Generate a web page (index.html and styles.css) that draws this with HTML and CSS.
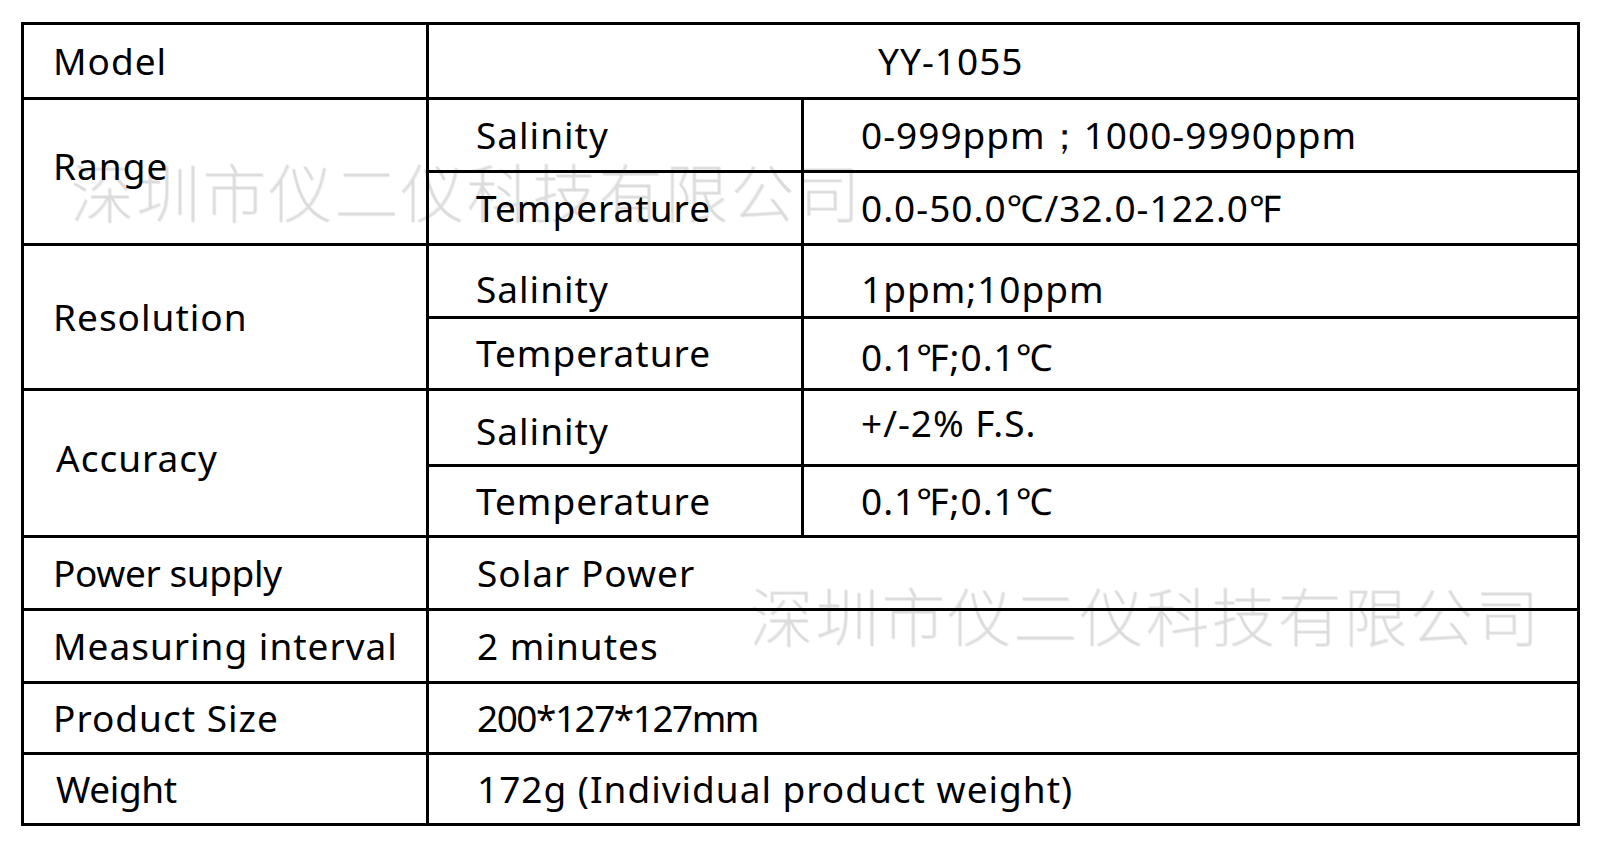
FILE: index.html
```html
<!DOCTYPE html>
<html lang="en">
<head>
    <meta charset="UTF-8">
    <meta name="viewport" content="width=device-width, initial-scale=1.0">
    <title>YY-1055 Specifications</title>
    <link rel="stylesheet" href="styles.css">
</head>
<body>
    <div class="sheet">
        <table class="spec-table">
            <colgroup>
                <col class="col-label">
                <col class="col-sub">
                <col class="col-value">
            </colgroup>
            <tr class="row-model">
                <td class="label">Model</td>
                <td class="model-value" colspan="2">YY-1055</td>
            </tr>

            <!-- Range -->
            <tr class="row-a">
                <td class="label up" rowspan="2">Range</td>
                <td class="sub">Salinity</td>
                <td class="value">0-999ppm；1000-9990ppm</td>
            </tr>
            <tr class="row-a">
                <td class="sub">Temperature</td>
                <td class="value">0.0-50.0℃/32.0-122.0℉</td>
            </tr>

            <!-- Resolution -->
            <tr class="row-a">
                <td class="label" rowspan="2">Resolution</td>
                <td class="sub down">Salinity</td>
                <td class="value down">1ppm;10ppm</td>
            </tr>
            <tr class="row-b">
                <td class="sub">Temperature</td>
                <td class="value down-s">0.1℉;0.1℃</td>
            </tr>

            <!-- Accuracy -->
            <tr class="row-c">
                <td class="label shift up" rowspan="2">Accuracy</td>
                <td class="sub down-s">Salinity</td>
                <td class="value up-s">+/-2% F.S.</td>
            </tr>
            <tr class="row-d">
                <td class="sub">Temperature</td>
                <td class="value">0.1℉;0.1℃</td>
            </tr>

            <tr class="row-a">
                <td class="label tight">Power supply</td>
                <td class="wide" colspan="2">Solar Power</td>
            </tr>
            <tr class="row-a">
                <td class="label">Measuring interval</td>
                <td class="wide" colspan="2">2 minutes</td>
            </tr>
            <tr class="row-d">
                <td class="label">Product Size</td>
                <td class="wide tighter" colspan="2">200*127*127mm</td>
            </tr>
            <tr class="row-d">
                <td class="label shift tight">Weight</td>
                <td class="wide" colspan="2">172g (Individual product weight)</td>
            </tr>
        </table>

        <!-- watermarks -->
        <div class="watermark mark-one">深圳市仪二仪科技有限公司</div>
        <div class="watermark mark-two">深圳市仪二仪科技有限公司</div>
    </div>
</body>
</html>
```

FILE: styles.css
```css
* {
    margin: 0;
    padding: 0;
    box-sizing: border-box;
}

body {
    background: #fff;
    font-family: "Noto Sans", "Open Sans", sans-serif;
    color: #000;
}

.sheet {
    position: relative;
    width: 1600px;
    height: 848px;
    padding: 22px 0 0 21px;
}

.spec-table {
    border-collapse: collapse;
    table-layout: fixed;
    width: 1556px;
    font-size: 37px;
    letter-spacing: 1px;
    line-height: 1;
}

.col-label { width: 405px; }
.col-sub { width: 375px; }
.col-value { width: 776px; }

.spec-table td {
    border: 3px solid #000;
    vertical-align: middle;
    white-space: nowrap;
    padding-bottom: 2px;
}

.row-model { height: 75px; }
.row-a { height: 73px; }
.row-b { height: 72px; }
.row-c { height: 76px; }
.row-d { height: 71px; }

.label {
    padding-left: 29px;
}

.label.shift {
    padding-left: 32px;
}

.model-value {
    padding-left: 449px;
}

.sub {
    padding-left: 47px;
}

.value {
    padding-left: 57px;
}

.wide {
    padding-left: 48px;
}

.tight { letter-spacing: -0.4px; }
.tighter { letter-spacing: -1.5px; }

.spec-table .up { padding-bottom: 12px; }
.spec-table .down { padding-top: 16px; }
.spec-table .down-s { padding-top: 8px; }
.spec-table .up-s { padding-bottom: 10px; }

.watermark {
    position: absolute;
    font-family: "Noto Sans CJK SC", sans-serif;
    font-weight: 300;
    font-size: 64px;
    letter-spacing: 2px;
    line-height: 1;
    color: rgba(0, 0, 0, 0.07);
    text-shadow: 1px 1px 0 rgba(0, 0, 0, 0.07);
    pointer-events: none;
}

.mark-one {
    left: 70px;
    top: 157px;
}

.mark-two {
    left: 749px;
    top: 581px;
}
```
